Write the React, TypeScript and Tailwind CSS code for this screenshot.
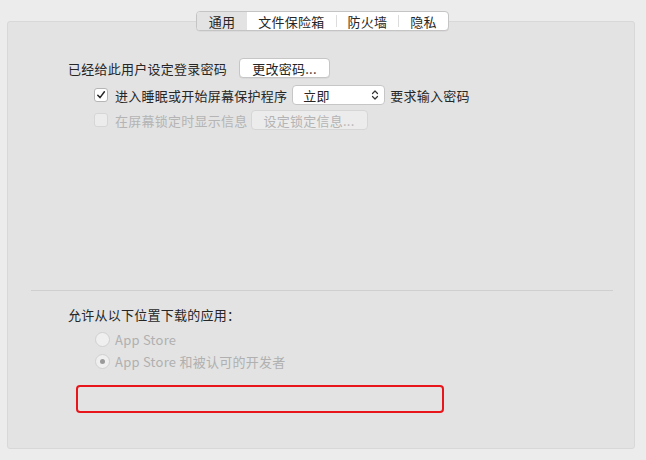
import React from "react";

const font = { fontFamily: '"Noto Sans CJK SC", "Noto Sans", sans-serif' };

function Checkbox({ checked, disabled }: { checked?: boolean; disabled?: boolean }) {
  return (
    <div
      className={`w-[14px] h-[14px] rounded-[3px] border flex items-center justify-center ${
        disabled ? "border-[#d6d6d6] bg-[#ececec]" : "border-[#b5b5b5] bg-white"
      }`}
    >
      {checked && (
        <svg width="10" height="10" viewBox="0 0 10 10">
          <path d="M1.8 5.2 L4 7.6 L8.4 1.8" fill="none" stroke="#262626" strokeWidth="1.5" strokeLinecap="round" strokeLinejoin="round" />
        </svg>
      )}
    </div>
  );
}

function Radio({ checked }: { checked?: boolean }) {
  return (
    <div className="w-[15px] h-[15px] rounded-full border border-[#d0d0d0] bg-[#efefef] flex items-center justify-center">
      {checked && <div className="w-[5px] h-[5px] rounded-full bg-[#9a9a9a]" />}
    </div>
  );
}

export default function App() {
  return (
    <div className="w-[646px] h-[460px] bg-[#ececec] relative text-[13px] tracking-[0.25px] text-[#262626]" style={font}>
      {/* Panel */}
      <div className="absolute left-[7px] top-[21px] w-[628px] h-[428px] bg-[#e3e3e3] border border-[#d8d8d8] rounded-[3px]">
        <div className="flex flex-col pl-[60px] pt-[36px]">
          <div className="flex items-center h-[20px]">
            <span className="leading-none">已经给此用户设定登录密码</span>
            <div className="ml-[12px] w-[91px] h-[20px] bg-white border border-[#c6c6c6] rounded-[4px] flex items-center justify-center shadow-[0_0.5px_0.5px_rgba(0,0,0,0.08)]">
              <span className="leading-none">更改密码...</span>
            </div>
          </div>
          <div className="flex items-center h-[20px] mt-[7px] pl-[26px]">
            <Checkbox checked />
            <span className="ml-[7px] leading-none">进入睡眠或开始屏幕保护程序</span>
            <div className="ml-[5px] w-[93px] h-[20px] bg-white border border-[#c6c6c6] rounded-[4px] flex items-center justify-between pl-[10px] pr-[4px]">
              <span className="leading-none">立即</span>
              <svg width="10" height="12" viewBox="0 0 10 12">
                <path d="M2.5 4.5 L5 2 L7.5 4.5 M2.5 7.5 L5 10 L7.5 7.5" fill="none" stroke="#333" strokeWidth="1.2" strokeLinecap="round" strokeLinejoin="round" />
              </svg>
            </div>
            <span className="ml-[5px] leading-none">要求输入密码</span>
          </div>
          <div className="flex items-center h-[20px] mt-[5px] pl-[26px] text-[#b4b4b4]">
            <Checkbox disabled />
            <span className="ml-[7px] leading-none">在屏幕锁定时显示信息</span>
            <div className="ml-[3px] w-[117px] h-[20px] bg-[#ececec] border border-[#d6d6d6] rounded-[4px] flex items-center justify-center">
              <span className="leading-none">设定锁定信息...</span>
            </div>
          </div>
        </div>

        <div className="absolute left-[23px] top-[268px] w-[582px] h-px bg-[#cfcfcf]" />

        <div className="absolute left-[60px] top-[283px] flex flex-col">
          <div className="h-[18px] flex items-center leading-none">允许从以下位置下载的应用：</div>
          <div className="flex items-center h-[20px] mt-[6px] pl-[27px] text-[#b0b0b0]">
            <Radio />
            <span className="ml-[5px] leading-none">App Store</span>
          </div>
          <div className="flex items-center h-[20px] mt-[2px] pl-[27px] text-[#b0b0b0]">
            <Radio checked />
            <span className="ml-[5px] leading-none">App Store 和被认可的开发者</span>
          </div>
        </div>

        <div className="absolute left-[68px] top-[363px] w-[368px] h-[28px] border-[2px] border-[#e8161b] rounded-[4px]" />
      </div>

      {/* Tabs */}
      <div className="absolute left-[196px] top-[11px] h-[20px] flex bg-white border border-[#c4c4c4] rounded-[4px] overflow-hidden shadow-[0_0.5px_0.5px_rgba(0,0,0,0.08)]">
        <div className="w-[50px] flex items-center justify-center bg-[#e3e3e3] leading-none">通用</div>
        <div className="w-[89px] flex items-center justify-center leading-none">文件保险箱</div>
        <div className="w-px bg-[#dcdcdc] my-[3px]" />
        <div className="w-[61px] flex items-center justify-center leading-none">防火墙</div>
        <div className="w-px bg-[#dcdcdc] my-[3px]" />
        <div className="w-[49px] flex items-center justify-center leading-none">隐私</div>
      </div>
    </div>
  );
}
